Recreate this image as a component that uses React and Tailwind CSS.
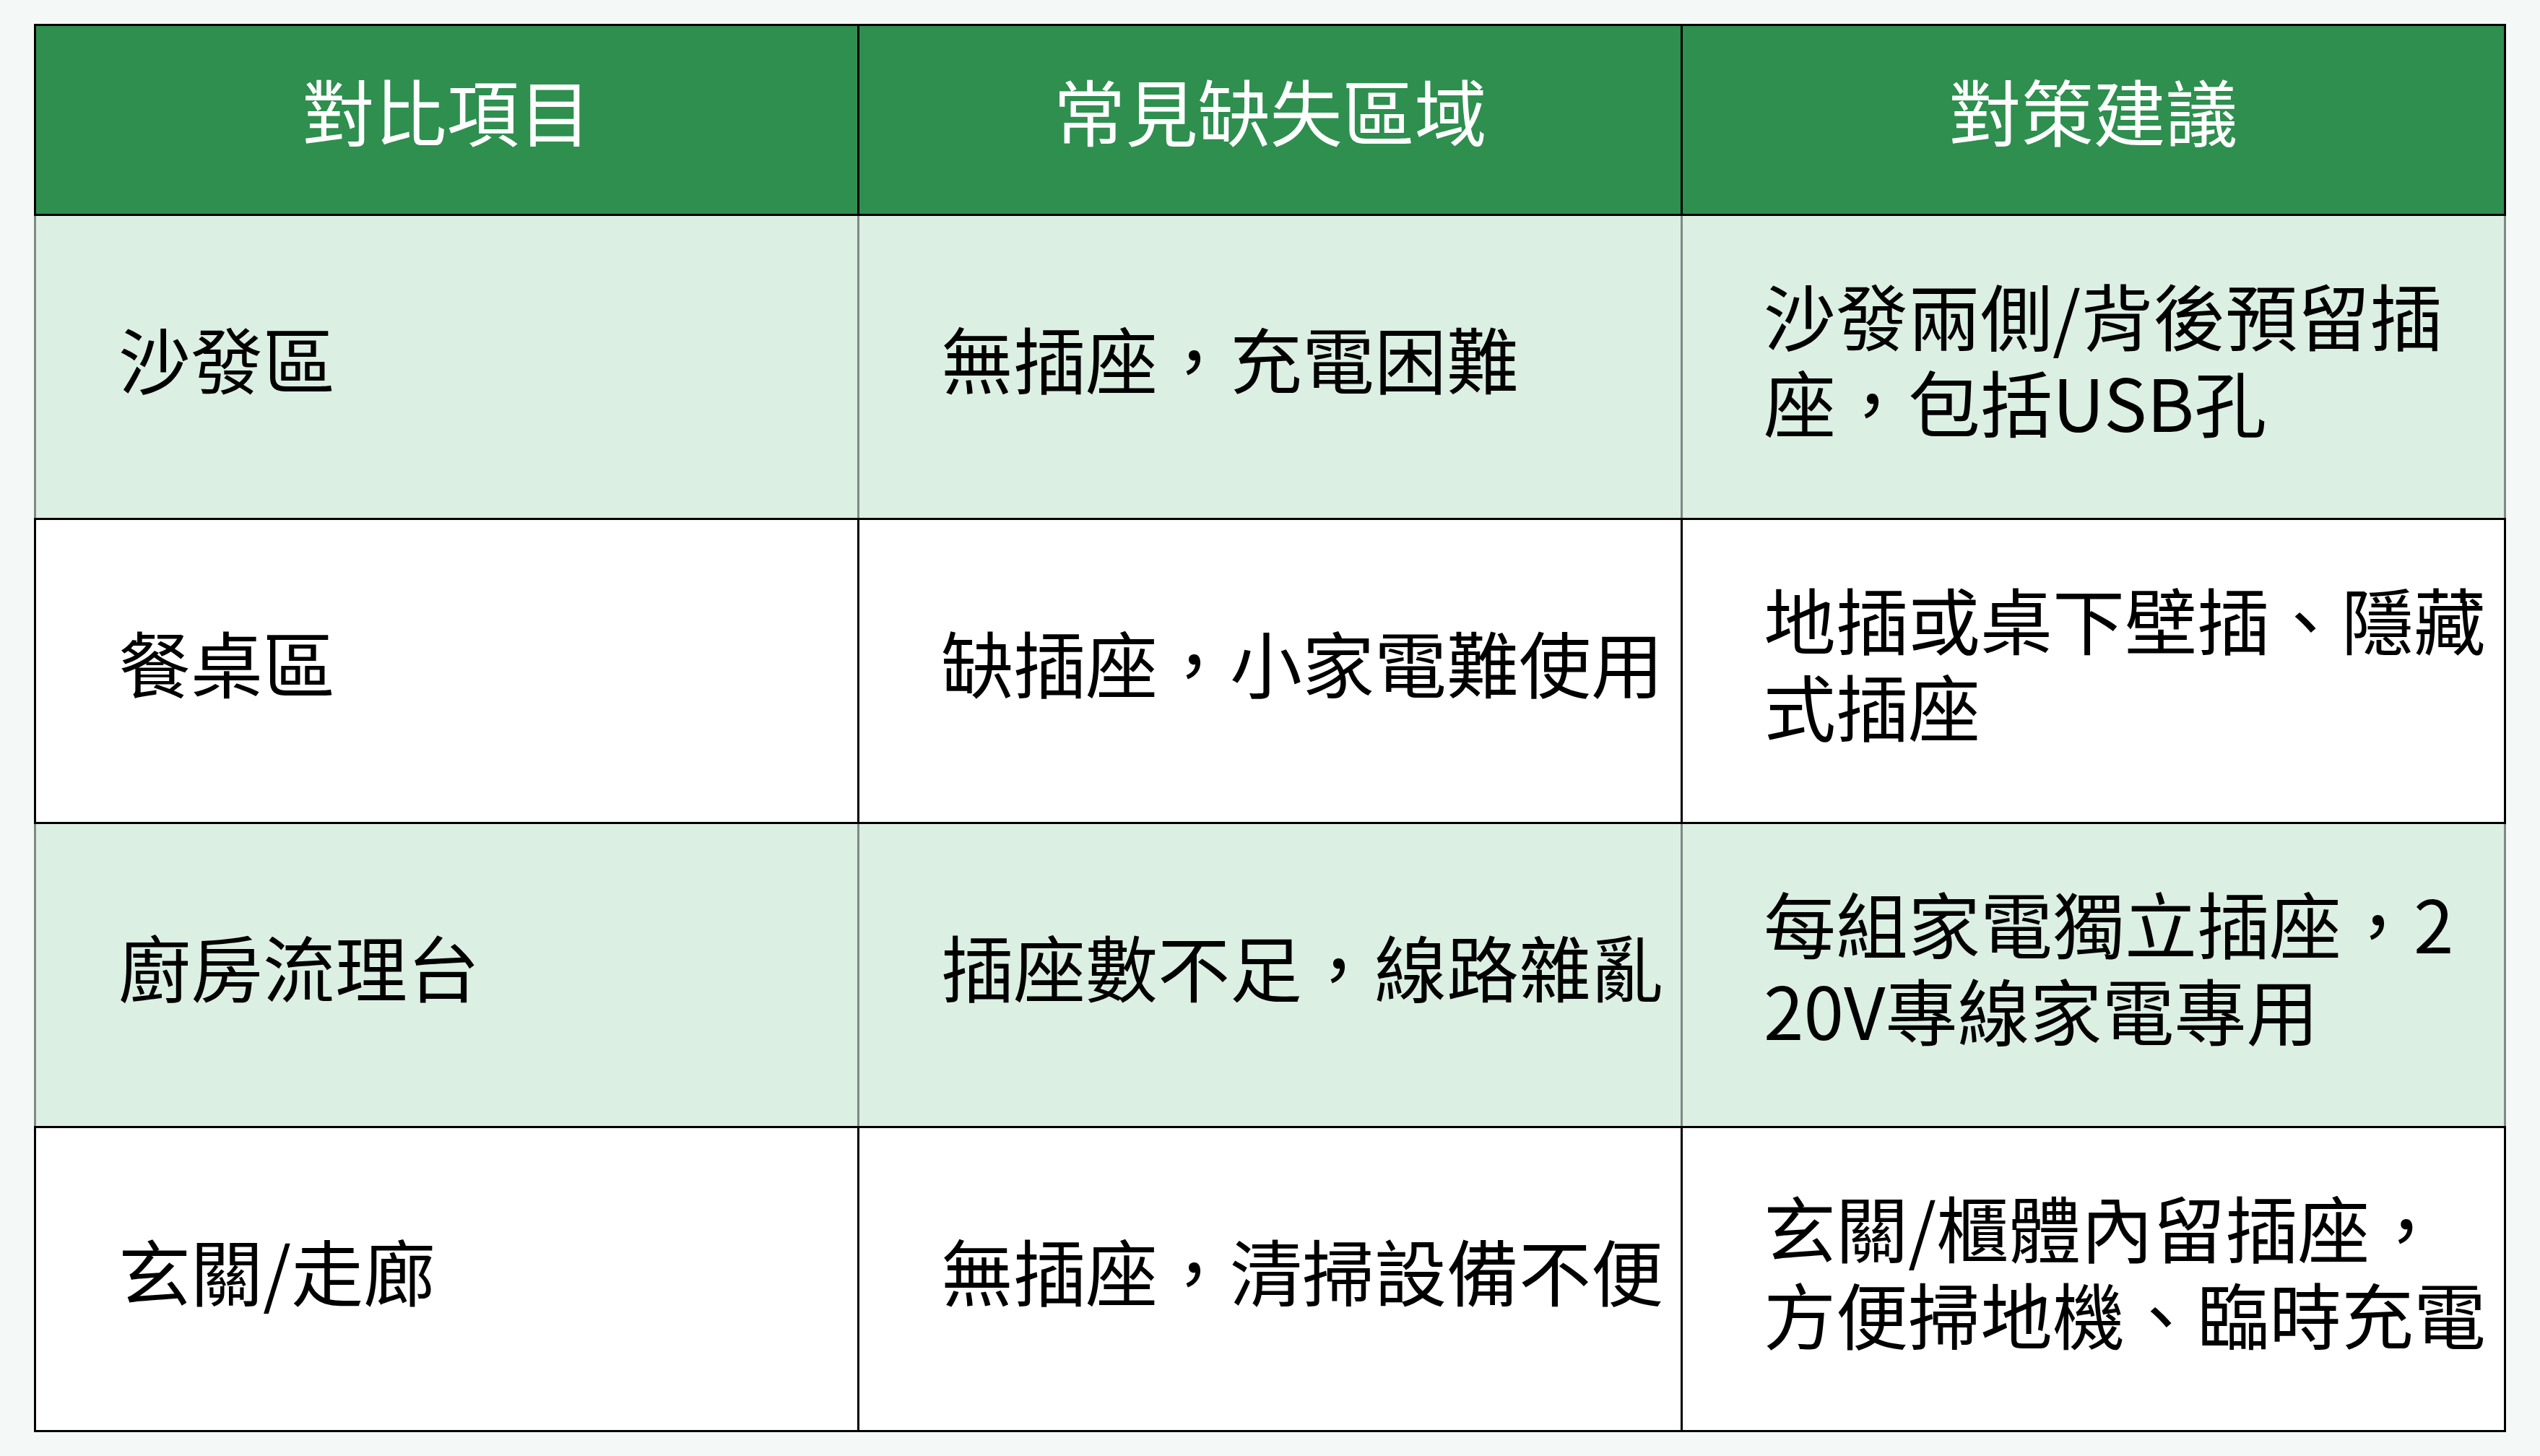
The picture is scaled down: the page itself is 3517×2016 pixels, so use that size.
const rows = [
  { item: '沙發區', area: '無插座，充電困難', tip: '沙發兩側/背後預留插座，包括USB孔', shaded: true },
  { item: '餐桌區', area: '缺插座，小家電難使用', tip: '地插或桌下壁插、隱藏式插座', shaded: false },
  { item: '廚房流理台', area: '插座數不足，線路雜亂', tip: '每組家電獨立插座，220V專線家電專用', shaded: true },
  { item: '玄關/走廊', area: '無插座，清掃設備不便', tip: '玄關/櫃體內留插座，方便掃地機、臨時充電', shaded: false },
]

export default function App() {
  return (
    <div
      className="min-h-screen bg-[#f4f8f7] px-[47px] py-[33px]"
      style={{ fontFamily: '"Noto Sans CJK TC", "Noto Sans", sans-serif' }}
    >
      <table className="w-full table-fixed border-collapse border-[3px] border-black">
        <thead>
          <tr className="bg-[#2e8f4f]">
            {['對比項目', '常見缺失區域', '對策建議'].map(h => (
              <th
                key={h}
                className="h-[263px] border-[3px] border-black text-center align-middle text-[100px] font-normal text-white pb-[28px]"
              >
                {h}
              </th>
            ))}
          </tr>
        </thead>
        <tbody>
          {rows.map(r => {
            const cell = r.shaded
              ? 'border-y-[3px] border-x-[3px] border-y-black border-x-[#7f8a84]'
              : 'border-[3px] border-black'
            return (
              <tr key={r.item} className={r.shaded ? 'bg-[#dbefe3]' : 'bg-white'}>
                <td className={`h-[421px] ${cell} pl-[114px] pr-[10px] pb-[26px] align-middle text-[100px] leading-[1.2] text-black`}>
                  {r.item}
                </td>
                <td className={`h-[421px] ${cell} pl-[113px] pr-[6px] pb-[26px] align-middle text-[100px] leading-[1.2] text-black whitespace-nowrap`}>
                  {r.area}
                </td>
                <td className={`h-[421px] ${cell} pl-[112px] pr-[20px] pb-[26px] align-middle text-[100px] leading-[1.2] text-black break-all`}>
                  {r.tip}
                </td>
              </tr>
            )
          })}
        </tbody>
      </table>
    </div>
  )
}
